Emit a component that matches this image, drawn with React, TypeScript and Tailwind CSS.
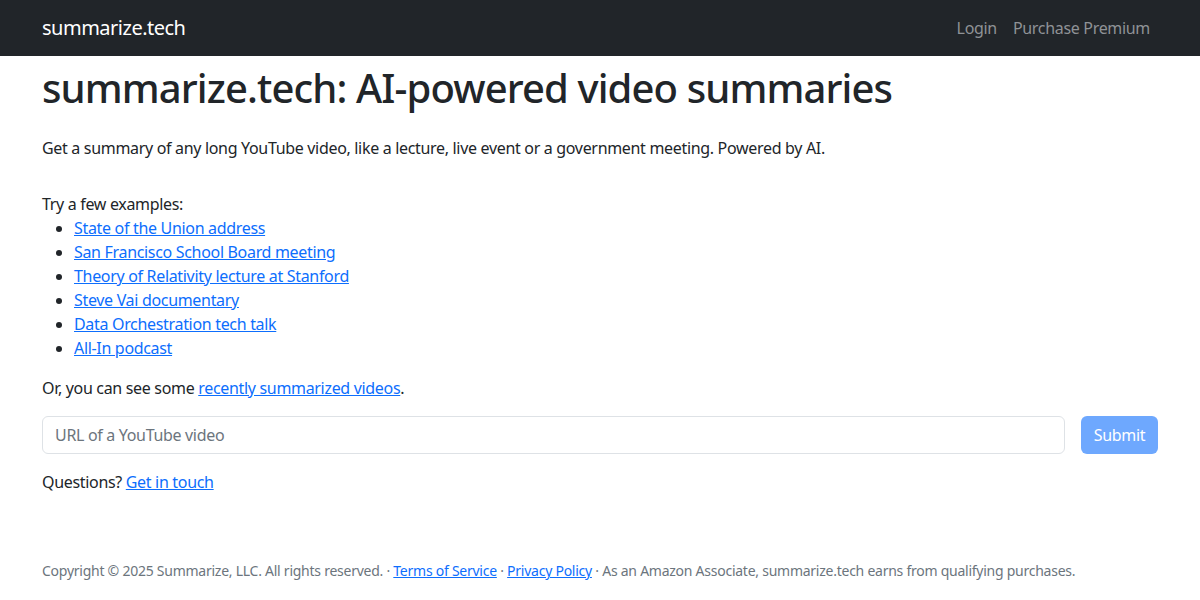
export default function App() {
  const examples = [
    "State of the Union address",
    "San Francisco School Board meeting",
    "Theory of Relativity lecture at Stanford",
    "Steve Vai documentary",
    "Data Orchestration tech talk",
    "All-In podcast",
  ];

  return (
    <div className="min-h-[600px] bg-white text-[#212529] font-['Noto_Sans',sans-serif] text-base leading-6 tracking-[-0.02em]">
      {/* top navbar */}
      <nav className="flex h-14 items-center justify-between bg-[#212529] px-[42px]">
        <a href="#" className="text-xl tracking-[-0.025em] text-white">
          summarize.tech
        </a>
        <div className="flex items-center">
          <a href="#" className="px-2 text-[#8f9296]">
            Login
          </a>
          <a href="#" className="px-2 text-[#8f9296]">
            Purchase Premium
          </a>
        </div>
      </nav>

      <main className="px-[42px]">
        <h1 className="mt-2 text-[40px] font-medium leading-[48px] tracking-[-0.022em]">
          summarize.tech: AI-powered video summaries
        </h1>
        <p className="mt-6">
          Get a summary of any long YouTube video, like a lecture, live event or a government meeting. Powered by AI.
        </p>

        <p className="mt-8">Try a few examples:</p>
        <ul className="list-disc pl-8">
          {examples.map((ex) => (
            <li key={ex}>
              <a href="#" className="text-[#0d6efd] underline">
                {ex}
              </a>
            </li>
          ))}
        </ul>

        <p className="mt-4">
          Or, you can see some{" "}
          <a href="#" className="text-[#0d6efd] underline">
            recently summarized videos
          </a>
          .
        </p>

        <form className="mt-4 flex gap-4" onSubmit={(e) => e.preventDefault()}>
          <input
            type="text"
            placeholder="URL of a YouTube video"
            className="h-[38px] flex-1 rounded-md border border-[#dee2e6] px-3 text-[#212529] placeholder:text-[#6c757d] outline-none"
          />
          <button
            type="submit"
            disabled
            className="h-[38px] w-[77px] rounded-md bg-[#6ea8fe] text-white"
          >
            Submit
          </button>
        </form>

        <p className="mt-4">
          Questions?{" "}
          <a href="#" className="text-[#0d6efd] underline">
            Get in touch
          </a>
        </p>

        <footer className="mt-[66px] text-sm leading-[21px] tracking-[-0.018em] text-[#6c757d]">
          Copyright © 2025 Summarize, LLC. All rights reserved. ·{" "}
          <a href="#" className="text-[#0d6efd] underline">
            Terms of Service
          </a>{" "}
          ·{" "}
          <a href="#" className="text-[#0d6efd] underline">
            Privacy Policy
          </a>{" "}
          · As an Amazon Associate, summarize.tech earns from qualifying purchases.
        </footer>
      </main>
    </div>
  );
}
